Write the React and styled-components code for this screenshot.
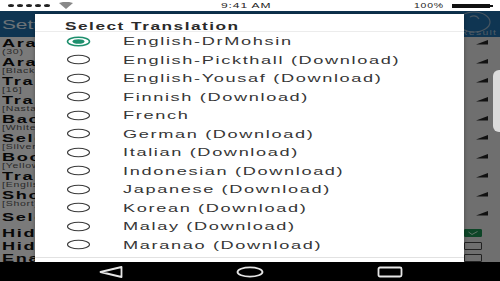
import styled, { createGlobalStyle } from "styled-components";

const GlobalStyle = createGlobalStyle`
  html, body {
    margin: 0;
    padding: 0;
    overflow: hidden;
    background: #000;
  }
`;

const Screen = styled.div`
  width: 500px;
  height: 281px;
  display: flex;
  flex-flow: column nowrap;
  overflow: hidden;
  font-family: "Liberation Sans", Arial, sans-serif;
`;

const Wide = styled.span`
  display: inline-block;
  white-space: nowrap;
  transform: scaleX(${(p) => p.$scale || 1.65});
  transform-origin: left center;
`;

/* status bar */
const StatusBar = styled.header`
  height: 11px;
  flex: 0 0 11px;
  background: #fff;
  display: grid;
  grid-template-columns: 1fr auto 1fr;
  align-items: center;
  padding: 0 8px;
  font-size: 8px;
  color: #222;
  letter-spacing: 0.6px;
`;

const Signal = styled.div`
  display: flex;
  align-items: center;
  gap: 3px;
`;

const Dot = styled.span`
  width: 6px;
  height: 3px;
  border-radius: 50%;
  background: #222;
`;

const Clock = styled.div`
  width: 64px;
  margin-left: 6px;
`;

const Battery = styled.div`
  display: flex;
  align-items: center;
  justify-content: flex-end;
  gap: 8px;
  padding-right: 2px;
`;

const BatteryLabel = styled.span`
  width: 30px;
`;

const BatteryBody = styled.span`
  width: 38px;
  height: 4px;
  background: #111;
  position: relative;
  &::after {
    content: "";
    position: absolute;
    right: -3px;
    top: 1px;
    width: 3px;
    height: 2px;
    background: #111;
  }
`;

/* content behind the dialog */
const Content = styled.main`
  flex: 1 1 auto;
  position: relative;
  overflow: hidden;
  background: #f4f4f4;
`;

const AppBar = styled.div`
  height: 26px;
  background: #1f6ba4;
  display: flex;
  align-items: center;
  justify-content: space-between;
  padding: 0 6px 0 2px;
  color: #d8e4ee;
  font-size: 13px;
`;

const Logo = styled.div`
  position: relative;
  width: 40px;
  height: 26px;
  display: flex;
  align-items: flex-end;
  justify-content: center;
  font-size: 8px;
  color: #9fb6c9;
  letter-spacing: 1px;
`;

const LogoMark = styled.svg`
  position: absolute;
  top: 0;
  left: 2px;
`;

const SettingRow = styled.div`
  height: 19px;
  display: flex;
  justify-content: space-between;
  padding-left: 2px;
`;

const SettingText = styled.div`
  display: flex;
  flex-flow: column nowrap;
  width: 40px;
  overflow: hidden;
  padding-top: ${(p) => (p.$single ? 4 : 1)}px;
  line-height: 10px;
`;

const SettingTitle = styled.span`
  font-size: 11px;
  font-weight: 700;
  color: #111;
  letter-spacing: 1px;
`;

const CheckTitle = styled(SettingTitle)`
  width: 40px;
  overflow: hidden;
`;

const SettingValue = styled.span`
  font-size: 7px;
  color: #555;
  line-height: 7px;
  letter-spacing: 0.5px;
`;

const Spinner = styled.div`
  width: 36px;
  background: #dedede;
  display: flex;
  justify-content: center;
  padding-top: 3px;
`;

const CheckRow = styled.div`
  height: 12.5px;
  display: flex;
  justify-content: space-between;
  align-items: center;
  padding-left: 2px;
`;

const CheckCell = styled.div`
  width: 36px;
  height: 100%;
  background: #dedede;
  display: flex;
  align-items: center;
  padding-left: 1px;
`;

const Checkbox = styled.span`
  width: 16px;
  height: 6px;
  border: 1px solid ${(p) => (p.$checked ? "#1b8a4e" : "#444")};
  background: ${(p) => (p.$checked ? "#1b8a4e" : "transparent")};
  border-radius: 1px;
  display: flex;
  align-items: center;
  justify-content: center;
`;

const Dim = styled.div`
  position: absolute;
  inset: 0;
  background: rgba(0, 0, 0, 0.5);
`;

const ScrollThumb = styled.div`
  position: absolute;
  right: -6px;
  top: 59px;
  width: 13px;
  height: 62px;
  border-radius: 6px;
  background: #dcdcdc;
`;

/* dialog */
const Dialog = styled.section`
  position: absolute;
  top: 3px;
  left: 35px;
  width: 429px;
  height: 262px;
  background: #fff;
  box-shadow: 0 0 4px rgba(0, 0, 0, 0.35);
  display: flex;
  flex-flow: column nowrap;
`;

const DialogTitle = styled.h2`
  margin: 0;
  height: 18px;
  flex: 0 0 18px;
  box-sizing: border-box;
  padding: 6px 0 0 30px;
  font-size: 11.5px;
  font-weight: 700;
  color: #2a2a2a;
  letter-spacing: 1px;
  line-height: 12px;
  border-bottom: 1px solid #ececec;
`;

const Options = styled.ul`
  list-style: none;
  margin: 0;
  padding: 0;
  border-bottom: 1px solid #e2e2e2;
  height: 225px;
`;

const Option = styled.li`
  height: 18.5px;
  display: flex;
  align-items: center;
  padding-left: 31px;
  gap: 32px;
  font-size: 11px;
  color: #363636;
  letter-spacing: 1px;
`;

/* nav bar */
const NavBar = styled.nav`
  height: 19px;
  flex: 0 0 19px;
  background: #000;
  display: flex;
  align-items: center;
  padding-left: 99px;
  gap: 113px;
`;

const Radio = ({ checked }) => (
  <svg width="25" height="11" viewBox="0 0 25 11">
    {checked ? (
      <>
        <ellipse cx="12.5" cy="5.5" rx="11" ry="4.3" fill="none" stroke="#1e8f6d" strokeWidth="1.6" />
        <ellipse cx="12.5" cy="5.5" rx="6" ry="2.3" fill="#1e8f6d" />
      </>
    ) : (
      <ellipse cx="12.5" cy="5.5" rx="11" ry="4.3" fill="none" stroke="#3a3a3a" strokeWidth="1.1" />
    )}
  </svg>
);

const Marker = () => (
  <svg width="12" height="5" viewBox="0 0 12 5">
    <polygon points="0,4.5 12,0 12,4.5" fill="#222" />
  </svg>
);

const settings = [
  ["Arabic Font Size", "(30)"],
  ["Arabic Font Color", "[Black]"],
  ["Translation Font Size", "[16]"],
  ["Translation Font", "[Nastaliq]"],
  ["Background Color", "[White]"],
  ["Selection Color", "[Silver]"],
  ["Bookmark Color", "[Yellow]"],
  ["Translation", "[English]"],
  ["Show Tafseer", "[Short]"],
  ["Select Reciter", null],
];

const checks = [
  ["Hide Arabic", true],
  ["Hide Translation", false],
  ["Enable Night Mode", false],
];

const translations = [
  "English-DrMohsin",
  "English-Pickthall (Download)",
  "English-Yousaf (Download)",
  "Finnish (Download)",
  "French",
  "German (Download)",
  "Italian (Download)",
  "Indonesian (Download)",
  "Japanese (Download)",
  "Korean (Download)",
  "Malay (Download)",
  "Maranao (Download)",
];

export default function App() {
  return (
    <Screen>
      <GlobalStyle />
      <StatusBar>
        <Signal>
          {[0, 1, 2, 3, 4].map((i) => (
            <Dot key={i} />
          ))}
          <svg width="14" height="7" viewBox="0 0 14 7" style={{ marginLeft: 6 }}>
            <path d="M0,1 Q7,-1.5 14,1 L7,7 Z" fill="#888" />
          </svg>
        </Signal>
        <Clock>
          <Wide $scale={1.5}>9:41 AM</Wide>
        </Clock>
        <Battery>
          <BatteryLabel>
            <Wide $scale={1.3}>100%</Wide>
          </BatteryLabel>
          <BatteryBody />
        </Battery>
      </StatusBar>

      <Content>
        <AppBar>
          <Wide $scale={1.6}>Settings</Wide>
          <Logo>
            <LogoMark width="36" height="24" viewBox="0 0 36 24">
              <ellipse cx="18" cy="11" rx="16" ry="10" fill="none" stroke="#8fa9bf" strokeWidth="1.2" />
              <path d="M14,6 Q20,3 23,8" fill="none" stroke="#8fa9bf" strokeWidth="1.2" />
            </LogoMark>
            <Wide $scale={1.3}>Result</Wide>
          </Logo>
        </AppBar>
        {settings.map(([title, value]) => (
          <SettingRow key={title}>
            <SettingText $single={!value}>
              <SettingTitle>
                <Wide>{title}</Wide>
              </SettingTitle>
              {value && (
                <SettingValue>
                  <Wide $scale={1.5}>{value}</Wide>
                </SettingValue>
              )}
            </SettingText>
            <Spinner>
              <Marker />
            </Spinner>
          </SettingRow>
        ))}
        {checks.map(([title, checked]) => (
          <CheckRow key={title}>
            <CheckTitle>
              <Wide>{title}</Wide>
            </CheckTitle>
            <CheckCell>
              <Checkbox $checked={checked}>
                {checked && (
                  <svg width="10" height="4" viewBox="0 0 10 4">
                    <path d="M0.5,1 L4,3.5 L9.5,0.5" fill="none" stroke="#bfe6cf" strokeWidth="1" />
                  </svg>
                )}
              </Checkbox>
            </CheckCell>
          </CheckRow>
        ))}
        <Dim />
        <ScrollThumb />
        <Dialog>
          <DialogTitle>
            <Wide $scale={1.5}>Select Translation</Wide>
          </DialogTitle>
          <Options>
            {translations.map((name, i) => (
              <Option key={name}>
                <Radio checked={i === 0} />
                <Wide>{name}</Wide>
              </Option>
            ))}
          </Options>
        </Dialog>
      </Content>

      <NavBar>
        <svg width="24" height="12" viewBox="0 0 24 12">
          <polygon points="22.5,1 22.5,11 1.5,6" fill="none" stroke="#e6e6e6" strokeWidth="1.8" strokeLinejoin="round" />
        </svg>
        <svg width="28" height="12" viewBox="0 0 28 12">
          <ellipse cx="14" cy="6" rx="12.5" ry="4.6" fill="none" stroke="#e6e6e6" strokeWidth="1.8" />
        </svg>
        <svg width="26" height="12" viewBox="0 0 26 12">
          <rect x="1.5" y="1.5" width="23" height="9" rx="1.5" fill="none" stroke="#e6e6e6" strokeWidth="1.8" />
        </svg>
      </NavBar>
    </Screen>
  );
}
